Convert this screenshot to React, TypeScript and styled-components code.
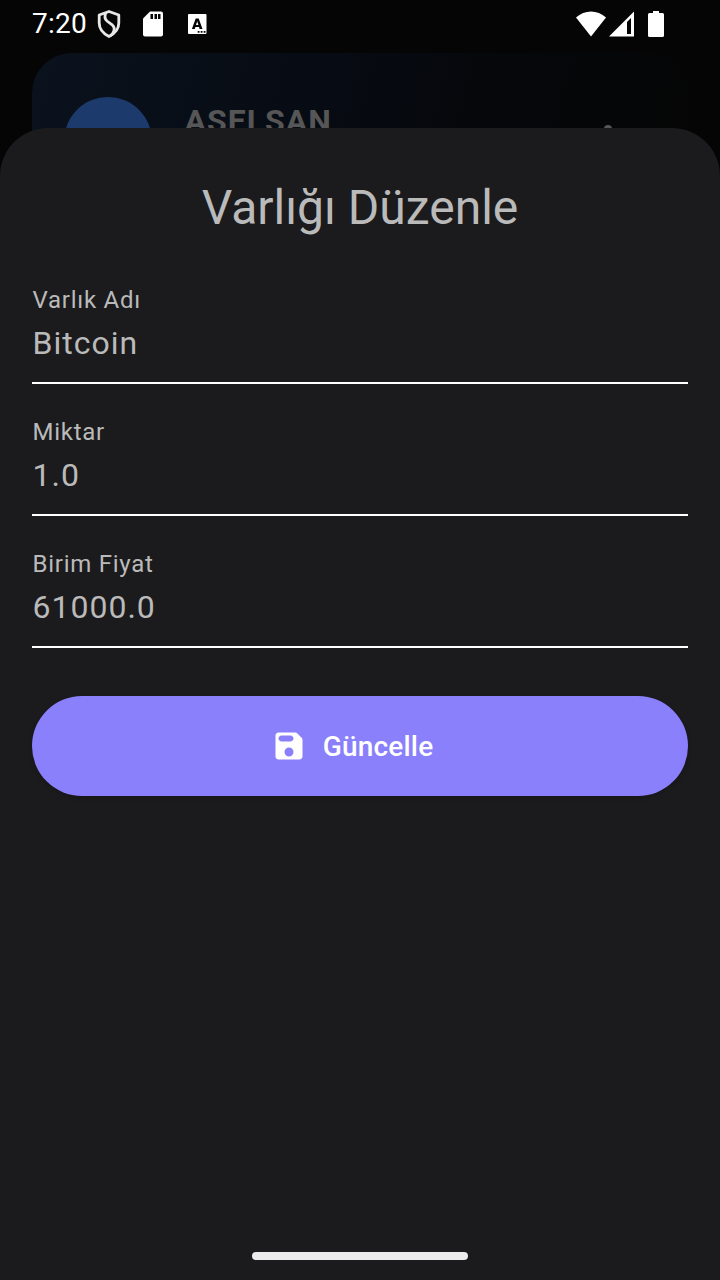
import React from "react";
import styled, { createGlobalStyle } from "styled-components";

const GlobalStyle = createGlobalStyle`
  * { box-sizing: border-box; }
  body { margin: 0; background: #050505; }
`;

const Screen = styled.div`
  position: relative;
  width: 720px;
  height: 1280px;
  overflow: hidden;
  background: #050505;
  color: #bababa;
  font-family: Roboto, "Liberation Sans", sans-serif;
`;

const StatusBar = styled.header`
  display: flex;
  justify-content: space-between;
  height: 53px;
  padding: 0 56px 0 32px;
  color: #fff;
`;

const StatusGroup = styled.div`
  display: flex;
  align-items: center;
  height: 48px;
`;

const Clock = styled.span`
  width: 55px;
  font-size: 28px;
  line-height: 48px;
  letter-spacing: 0.25px;
  white-space: nowrap;
`;

const StatusIcon = styled.svg<{ $w: number; $ml?: number }>`
  display: block;
  flex: none;
  width: ${(p) => p.$w}px;
  height: 48px;
  margin-left: ${(p) => p.$ml ?? 0}px;
`;

const AssetCard = styled.section`
  display: flex;
  align-items: center;
  height: 176px;
  margin: 0 32px;
  padding: 0 56px 0 32px;
  border-radius: 40px;
  background: linear-gradient(105deg, #0a121d 0%, #070b13 42%, #05070a 68%, #050505 100%);
`;

const Avatar = styled.div`
  width: 88px;
  height: 88px;
  border-radius: 50%;
  background: #1d3a6c;
`;

const AssetName = styled.div`
  flex: 1;
  align-self: flex-start;
  margin: 48px 0 0 32.500px;
  color: #565656;
  font-size: 32px;
  font-weight: 700;
  line-height: 40px;
  letter-spacing: 1px;
`;

const MoreIcon = styled.svg`
  width: 48px;
  height: 48px;
`;

const Sheet = styled.main`
  position: absolute;
  inset: 128px 0 0;
  display: flex;
  flex-direction: column;
  padding: 48px 32px 20px;
  border-radius: 48px 48px 0 0;
  background: #1b1b1d;
`;

const Title = styled.h1`
  margin: 0 0 48px;
  font-size: 48px;
  font-weight: 400;
  line-height: 64px;
  text-align: center;
`;

const Form = styled.div`
  display: flex;
  flex-direction: column;
`;

const Field = styled.div`
  display: flex;
  flex-direction: column;
  height: 96px;
  margin-bottom: 36px;
  padding-left: 0.5px;
  border-bottom: 2px solid #fff;
`;

const FieldLabel = styled.span`
  font-size: 24px;
  line-height: 24px;
  letter-spacing: 0.75px;
`;

const FieldValue = styled.span`
  margin-top: 12px;
  font-size: 32px;
  line-height: 38px;
  letter-spacing: 1px;
`;

const UpdateButton = styled.button`
  display: flex;
  align-items: center;
  justify-content: center;
  gap: 16px;
  flex: none;
  height: 100px;
  margin-top: 12px;
  padding: 0 16px 0 0;
  border: 0;
  border-radius: 50px;
  background: #8b80fb;
  box-shadow: 0 2px 4px rgba(0, 0, 0, 0.18);
  color: #fff;
  font-family: inherit;
  font-size: 28px;
  font-weight: 500;
  letter-spacing: 0.2px;
`;

const SaveIcon = styled.svg`
  width: 36px;
  height: 36px;
`;

const HomeHandle = styled.div`
  align-self: center;
  width: 216px;
  height: 8px;
  margin-top: auto;
  border-radius: 4px;
  background: #ececec;
`;

const fields = [
  { label: "Varlık Adı", value: "Bitcoin" },
  { label: "Miktar", value: "1.0" },
  { label: "Birim Fiyat", value: "61000.0" },
];

export default function App() {
  return (
    <Screen>
      <GlobalStyle />
      <StatusBar>
        <StatusGroup>
          <Clock>7:20</Clock>
          <StatusIcon $w={24} $ml={10} viewBox="0 0 24 48" fill="none" stroke="#e8e8e8" strokeWidth="2.8">
            <path d="M12 11.500 21.800 15V23c0 6-4 10.500-9.800 13.500C6.200 33.500 2.200 29 2.200 23V15Z" strokeLinejoin="round" />
            <path d="M9 12.500C7.200 16.500 7.600 19 10 21l5.500 4.200c3 2.600 2 7.300-2.300 10.800" />
          </StatusIcon>
          <StatusIcon $w={20} $ml={22} viewBox="0 0 20 48">
            <path d="M7 11.500h11a2 2 0 0 1 2 2v21a2 2 0 0 1-2 2H2a2 2 0 0 1-2-2V18.500Z" fill="#fff" />
            <path d="M7.500 14h2.500v5H7.500zM11.500 14H14v5h-2.500zM15 14h2.500v5H15z" fill="#050505" />
          </StatusIcon>
          <StatusIcon $w={19} $ml={25} viewBox="0 0 19 48">
            <rect y="14" width="18.500" height="20" rx="1" fill="#fff" />
            <path
              fillRule="evenodd"
              d="M7.700 18.500h3L14.500 29h-2.900l-.6-1.900H7.400L6.800 29H3.900ZM9.200 21.300 8 25h2.400Z"
              fill="#050505"
            />
            <path d="M9.700 31h1.800v1.800H9.700zM12.700 31h1.800v1.800h-1.800zM15.700 31h1.800v1.800h-1.800z" fill="#050505" />
          </StatusIcon>
        </StatusGroup>
        <StatusGroup>
          <StatusIcon $w={30} viewBox="0 0 30 48">
            <path d="M0 17.500C8.500 9.500 21.500 9.500 30 17.500L15 36.500Z" fill="#fff" />
          </StatusIcon>
          <StatusIcon $w={25} $ml={3} viewBox="0 0 25 48">
            <path fillRule="evenodd" d="M25 11.500v25H0ZM22 18l-4 4v12h4Z" fill="#fff" />
          </StatusIcon>
          <StatusIcon $w={16} $ml={14} viewBox="0 0 16 48">
            <path d="M5 11h6v2h3.500a1.500 1.500 0 0 1 1.500 1.500v21a1.500 1.500 0 0 1-1.500 1.500h-13A1.500 1.500 0 0 1 0 35.500v-21A1.500 1.500 0 0 1 1.500 13H5Z" fill="#fff" />
          </StatusIcon>
        </StatusGroup>
      </StatusBar>
      <AssetCard>
        <Avatar />
        <AssetName>ASELSAN</AssetName>
        <MoreIcon viewBox="0 0 24 24" fill="#565656">
          <circle cx="12" cy="6" r="2" />
          <circle cx="12" cy="12" r="2" />
          <circle cx="12" cy="18" r="2" />
        </MoreIcon>
      </AssetCard>
      <Sheet>
        <Title>Varlığı Düzenle</Title>
        <Form>
          {fields.map((f) => (
            <Field key={f.label}>
              <FieldLabel>{f.label}</FieldLabel>
              <FieldValue>{f.value}</FieldValue>
            </Field>
          ))}
        </Form>
        <UpdateButton type="button">
          <SaveIcon viewBox="0 0 24 24" fill="#fff">
            <path d="M17.590 3.590c-.38-.38-.89-.59-1.420-.59H5c-1.110 0-2 .9-2 2v14c0 1.100.9 2 2 2h14c1.100 0 2-.9 2-2V7.830c0-.53-.21-1.040-.59-1.410l-2.820-2.830zM12 19c-1.660 0-3-1.340-3-3s1.340-3 3-3 3 1.340 3 3-1.340 3-3 3zm1-10H7c-1.100 0-2-.9-2-2s.9-2 2-2h6c1.100 0 2 .9 2 2s-.9 2-2 2z" />
          </SaveIcon>
          Güncelle
        </UpdateButton>
        <HomeHandle />
      </Sheet>
    </Screen>
  );
}
